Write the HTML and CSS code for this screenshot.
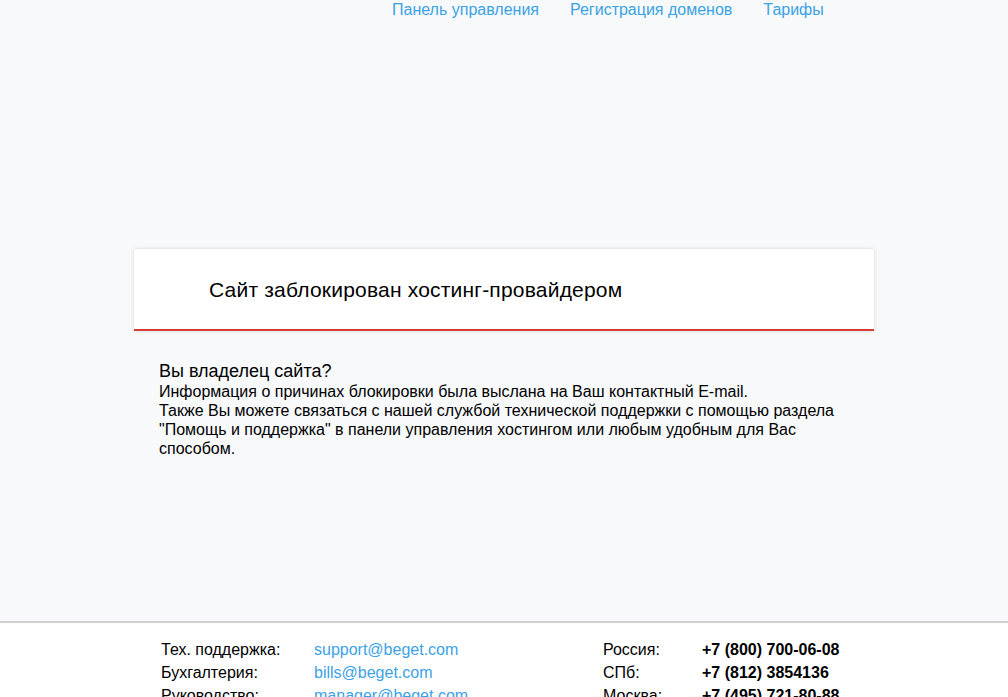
FILE: index.html
```html
<!DOCTYPE html>
<html lang="ru">
<head>
<meta charset="utf-8">
<title>Сайт заблокирован</title>
<link rel="stylesheet" href="styles.css">
</head>
<body>
<div class="page">
  <nav class="nav">
    <a href="#">Панель управления</a>
    <a href="#">Регистрация доменов</a>
    <a href="#">Тарифы</a>
  </nav>
  <main class="main">
    <div class="card">
      <h1 class="card-title">Сайт заблокирован хостинг-провайдером</h1>
    </div>
    <div class="info">
      <h2 class="info-title">Вы владелец сайта?</h2>
      <p class="info-text">Информация о причинах блокировки была выслана на Ваш контактный E-mail.<br>Также Вы можете связаться с нашей службой технической поддержки с помощью раздела "Помощь и поддержка" в панели управления хостингом или любым удобным для Вас способом.</p>
    </div>
  </main>
  <footer class="footer">
    <div class="footer-inner">
      <div class="contacts">
        <span class="label">Тех. поддержка:</span><a href="#">support@beget.com</a>
        <span class="label">Бухгалтерия:</span><a href="#">bills@beget.com</a>
        <span class="label">Руководство:</span><a href="#">manager@beget.com</a>
      </div>
      <div class="phones">
        <span class="label">Россия:</span><b>+7 (800) 700-06-08</b>
        <span class="label">СПб:</span><b>+7 (812) 3854136</b>
        <span class="label">Москва:</span><b>+7 (495) 721-80-88</b>
      </div>
    </div>
  </footer>
</div>
</body>
</html>
```
FILE: styles.css
```css
html, body {
  margin: 0;
  padding: 0;
}
body {
  background: #f7f9fb;
  font-family: "Liberation Sans", Arial, sans-serif;
  color: #000;
  font-size: 16px;
}
a {
  color: #3ba2e6;
  text-decoration: none;
}
.page {
  min-height: 697px;
  display: flex;
  flex-direction: column;
}
.nav {
  flex: none;
  display: flex;
  gap: 31px;
  padding-left: 392px;
  height: 20px;
  line-height: 20px;
}
.main {
  flex: none;
  padding-top: 229px;
  height: 601px;
  box-sizing: border-box;
}
.card {
  margin-left: 134px;
  width: 740px;
  height: 82px;
  background: #fff;
  border-bottom: 2px solid #d93a3a;
  box-shadow: 0 0 4px rgba(0, 0, 0, 0.15);
  display: flex;
  align-items: center;
  box-sizing: border-box;
  padding-left: 75px;
  padding-top: 1px;
}
.card-title {
  margin: 0;
  font-size: 21px;
  font-weight: normal;
  letter-spacing: 0.2px;
}
.info {
  margin-left: 159px;
  width: 690px;
  padding-top: 29px;
}
.info-title {
  margin: 0;
  font-size: 18px;
  font-weight: normal;
  line-height: 22px;
}
.info-text {
  margin: 0;
  line-height: 19px;
}
.footer {
  border-top: 2px solid #cfcfcf;
  background: #fff;
  flex: 1;
}
.footer-inner {
  display: flex;
  padding-left: 161px;
  padding-top: 15px;
  line-height: 23px;
}
.contacts {
  display: grid;
  grid-template-columns: 153px auto;
  width: 442px;
}
.phones {
  display: grid;
  grid-template-columns: 99px auto;
}
```
